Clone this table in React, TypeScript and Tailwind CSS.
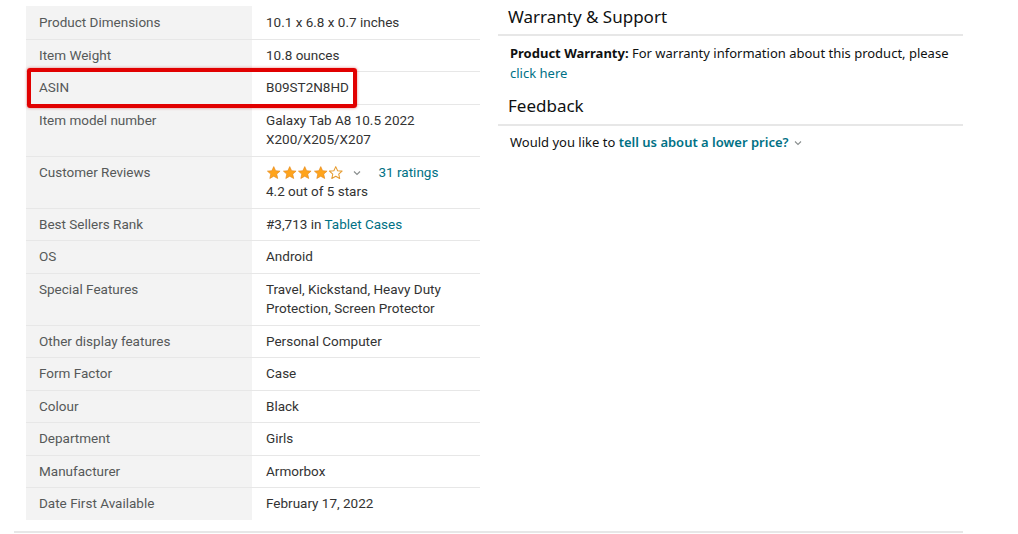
import React from "react";

type Row = { label: string; value: React.ReactNode };

const Star = ({ filled }: { filled: boolean }) => (
  <svg width="15.5" height="15.5" viewBox="0 0 24 24" className="shrink-0">
    <path
      d="M12 2.5l2.9 6.3 6.9.7-5.2 4.6 1.5 6.8L12 17.4l-6.1 3.5 1.5-6.8-5.2-4.6 6.9-.7z"
      fill={filled ? "#ffa41c" : "none"}
      stroke={filled ? "#e3881a" : "#e69b2f"}
      strokeWidth={filled ? 1 : 1.6}
      strokeLinejoin="round"
    />
  </svg>
);

const rows: Row[] = [
  { label: "Product Dimensions", value: "10.1 x 6.8 x 0.7 inches" },
  { label: "Item Weight", value: "10.8 ounces" },
  { label: "ASIN", value: "B09ST2N8HD" },
  { label: "Item model number", value: "Galaxy Tab A8 10.5 2022 X200/X205/X207" },
  {
    label: "Customer Reviews",
    value: (
      <div>
        <div className="flex items-center">
          <Star filled />
          <Star filled />
          <Star filled />
          <Star filled />
          <Star filled={false} />
          <svg width="10" height="10" viewBox="0 0 10 10" className="ml-[8px] mt-[1px]">
            <path d="M2 3.5l3 3 3-3" fill="none" stroke="#8a8f8f" strokeWidth="1.2" />
          </svg>
          <span className="ml-[17px] text-[#007185]">31 ratings</span>
        </div>
        <div>4.2 out of 5 stars</div>
      </div>
    ),
  },
  {
    label: "Best Sellers Rank",
    value: (
      <span>
        #3,713 in <span className="text-[#007185]">Tablet Cases</span>
      </span>
    ),
  },
  { label: "OS", value: "Android" },
  { label: "Special Features", value: "Travel, Kickstand, Heavy Duty Protection, Screen Protector" },
  { label: "Other display features", value: "Personal Computer" },
  { label: "Form Factor", value: "Case" },
  { label: "Colour", value: "Black" },
  { label: "Department", value: "Girls" },
  { label: "Manufacturer", value: "Armorbox" },
  { label: "Date First Available", value: "February 17, 2022" },
];

export default function App() {
  return (
    <div className="w-[1018px] h-[534px] bg-white overflow-hidden relative">
      <div className="flex items-start">
        <div className="ml-[26px] mt-[6px] w-[454px] relative font-['Roboto',sans-serif] text-[13.5px] leading-[19.5px]">
          {rows.map((r, i) => (
            <div key={i} className={`flex ${i < rows.length - 1 ? "border-b border-[#e7e7e7]" : "border-b border-transparent"}`}>
              <div className={`w-[226px] shrink-0 bg-[#f3f3f3] px-[13px] ${i === 0 ? "pt-[7px]" : "pt-[6px]"} pb-[6px] text-[#565959]`}>{r.label}</div>
              <div className={`flex-1 pl-[14px] pr-[10px] ${i === 0 ? "pt-[7px]" : "pt-[6px]"} pb-[6px] text-[#333333]`}>{r.value}</div>
            </div>
          ))}
          <div className="absolute left-[1px] top-[62px] w-[330px] h-[40px] border-[4px] border-[#e10000] rounded-[3px] shadow-[0_0_3px_rgba(200,0,0,0.5)]" />
        </div>
        <div className="ml-[18px] w-[465px] font-['Noto_Sans',sans-serif] text-[#0f1111]">
          <div className="pl-[10px] text-[17px] leading-[24px] pt-[5px] pb-[5px] border-b-2 border-[#e7e7e7]">Warranty &amp; Support</div>
          <div className="pl-[12px] pt-[7px] text-[13px] leading-[20px]">
            <span className="font-bold">Product Warranty:</span> For warranty information about this product, please{" "}
            <br />
            <span className="text-[#007185]">click here</span>
          </div>
          <div className="pl-[10px] text-[17px] leading-[24px] pt-[11px] pb-[6px] border-b-2 border-[#e7e7e7]">Feedback</div>
          <div className="pl-[12px] pt-[6px] text-[13px] leading-[20px] flex items-center">
            <span>Would you like to&nbsp;</span>
            <span className="font-semibold text-[#007185]">tell us about a lower price?</span>
            <svg width="10" height="10" viewBox="0 0 10 10" className="ml-[4px] mt-[1px]">
              <path d="M2 3.5l3 3 3-3" fill="none" stroke="#8a8f8f" strokeWidth="1.1" />
            </svg>
          </div>
        </div>
      </div>
      <div className="absolute left-[14px] top-[531px] w-[949px] h-[2px] bg-[#e7e7e7]" />
    </div>
  );
}
